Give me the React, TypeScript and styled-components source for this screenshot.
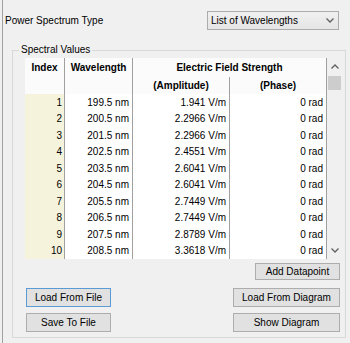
import styled, { createGlobalStyle } from "styled-components";

const GlobalStyle = createGlobalStyle`
  html, body {
    margin: 0;
    padding: 0;
    background: #f0f0f0;
  }
  body {
    font-family: "Liberation Sans", Arial, sans-serif;
    font-size: 10px;
    color: #000;
  }
`;

const Window = styled.div`
  width: 350px;
  height: 343px;
  box-sizing: border-box;
  padding-left: 2px;
  overflow: hidden;
`;

const Panel = styled.div`
  height: 100%;
  box-sizing: border-box;
  border-left: 1px solid #a0a0a0;
  padding-top: 11px;
`;

const TopRow = styled.div`
  display: flex;
  align-items: center;
  height: 19px;
  padding: 0 11px 0 2px;
`;

const Label = styled.span`
  line-height: 12px;
`;

const Select = styled.div`
  margin-left: auto;
  width: 132px;
  height: 19px;
  box-sizing: border-box;
  display: flex;
  align-items: center;
  justify-content: space-between;
  padding: 0 4px 0 3px;
  border: 1px solid #acacac;
  background: linear-gradient(#f0f0f0, #e5e5e5);
`;

const GroupBox = styled.fieldset`
  margin: 14px 4px 0 9px;
  padding: 2px 3px 0 12px;
  height: 294px;
  box-sizing: border-box;
  border: 1px solid #d8d8d8;
  min-width: 0;
`;

const Legend = styled.legend`
  padding: 0 2px;
  margin-left: -6px;
  line-height: 12px;
`;

const Table = styled.div`
  display: flex;
  width: 318px;
`;

const Sheet = styled.div`
  display: grid;
  grid-template-columns: 40px 68px 97px 97px;
  grid-template-rows: 19px 17px repeat(10, 16.5px);
  background: #fff;
`;

const HeadCell = styled.div<{ $col: string; $row: string; $top?: boolean; $line?: boolean }>`
  grid-column: ${(p) => p.$col};
  grid-row: ${(p) => p.$row};
  display: flex;
  justify-content: center;
  align-items: ${(p) => (p.$top ? "flex-start" : "center")};
  padding-top: ${(p) => (p.$top ? "2px" : "0")};
  line-height: 15px;
  font-weight: bold;
  background: #fbfbfb;
  border-right: ${(p) => (p.$line ? "1px solid #a0a0a0" : "1px solid transparent")};
`;

const Cell = styled.div<{ $index?: boolean }>`
  display: flex;
  align-items: center;
  justify-content: flex-end;
  padding-right: ${(p) => (p.$index ? "2px" : "3px")};
  background: ${(p) => (p.$index ? "#f6f3dc" : "#fff")};
  border-right: 1px solid #a0a0a0;
  white-space: nowrap;
`;

const ScrollBar = styled.div`
  width: 16px;
  display: flex;
  flex-direction: column;
  background: #f0f0f0;
`;

const Arrow = styled.div`
  height: 17px;
  display: flex;
  align-items: center;
  justify-content: center;
`;

const Track = styled.div`
  flex: 1;
  padding-top: 1px;
`;

const Thumb = styled.div`
  width: 13px;
  height: 14px;
  margin-left: 1px;
  background: #cdcdcd;
`;

const Button = styled.div<{ $width: number; $height?: number; $focus?: boolean }>`
  width: ${(p) => p.$width}px;
  height: ${(p) => p.$height ?? 19}px;
  box-sizing: border-box;
  display: flex;
  align-items: center;
  justify-content: center;
  border: 1px solid ${(p) => (p.$focus ? "#5b9bd5" : "#adadad")};
  background: #e1e1e1;
  white-space: nowrap;
`;

const AddRow = styled.div`
  display: flex;
  justify-content: flex-end;
  padding: 4px 2px 0 0;
`;

const ButtonRow = styled.div<{ $gap: number }>`
  display: flex;
  justify-content: space-between;
  padding: ${(p) => p.$gap}px 2px 0 1px;
`;

const Chevron = ({ up }: { up?: boolean }) => (
  <svg width="8" height="5" viewBox="0 0 8 5">
    <polyline
      points={up ? "0.5,4.5 4,1 7.5,4.5" : "0.5,0.5 4,4 7.5,0.5"}
      fill="none"
      stroke="#606060"
      strokeWidth="1.3"
    />
  </svg>
);

const rows: [string, string][] = [
  ["199.5 nm", "1.941 V/m"],
  ["200.5 nm", "2.2966 V/m"],
  ["201.5 nm", "2.2966 V/m"],
  ["202.5 nm", "2.4551 V/m"],
  ["203.5 nm", "2.6041 V/m"],
  ["204.5 nm", "2.6041 V/m"],
  ["205.5 nm", "2.7449 V/m"],
  ["206.5 nm", "2.7449 V/m"],
  ["207.5 nm", "2.8789 V/m"],
  ["208.5 nm", "3.3618 V/m"],
];

const App = (): JSX.Element => {
  return (
    <>
      <GlobalStyle />
      <Window>
        <Panel>
          <TopRow>
            <Label>Power Spectrum Type</Label>
            <Select>
              <span>List of Wavelengths</span>
              <Chevron />
            </Select>
          </TopRow>
          <GroupBox>
            <Legend>Spectral Values</Legend>
            <Table>
              <Sheet>
                <HeadCell $col="1" $row="1 / 3" $top $line>
                  Index
                </HeadCell>
                <HeadCell $col="2" $row="1 / 3" $top $line>
                  Wavelength
                </HeadCell>
                <HeadCell $col="3 / 5" $row="1" $line>
                  Electric Field Strength
                </HeadCell>
                <HeadCell $col="3" $row="2" $line>
                  (Amplitude)
                </HeadCell>
                <HeadCell $col="4" $row="2" $line>
                  (Phase)
                </HeadCell>
                {rows.map(([wl, amp], i) => (
                  <>
                    <Cell $index key={`i${i}`}>{i + 1}</Cell>
                    <Cell key={`w${i}`}>{wl}</Cell>
                    <Cell key={`a${i}`}>{amp}</Cell>
                    <Cell key={`p${i}`}>0 rad</Cell>
                  </>
                ))}
              </Sheet>
              <ScrollBar>
                <Arrow>
                  <Chevron up />
                </Arrow>
                <Track>
                  <Thumb />
                </Track>
                <Arrow>
                  <Chevron />
                </Arrow>
              </ScrollBar>
            </Table>
            <AddRow>
              <Button $width={85} $height={17}>
                Add Datapoint
              </Button>
            </AddRow>
            <ButtonRow $gap={8}>
              <Button $width={85} $focus>
                Load From File
              </Button>
              <Button $width={107}>Load From Diagram</Button>
            </ButtonRow>
            <ButtonRow $gap={6}>
              <Button $width={85}>Save To File</Button>
              <Button $width={107}>Show Diagram</Button>
            </ButtonRow>
          </GroupBox>
        </Panel>
      </Window>
    </>
  );
};

export default App;
